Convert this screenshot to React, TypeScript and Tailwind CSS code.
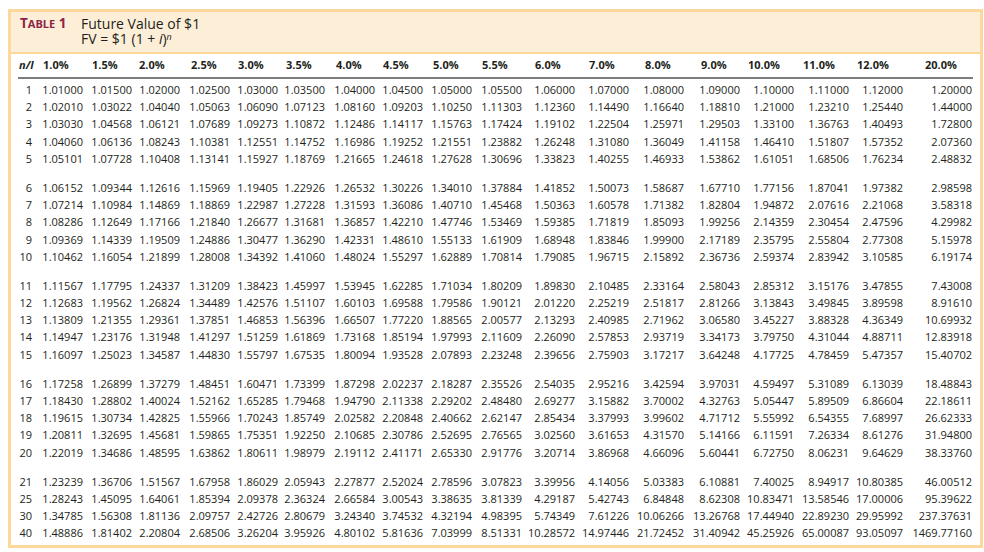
const COLS =
  'grid grid-cols-[14px_51px_49px_48px_50px_48px_47px_50px_48px_49px_50px_53px_54px_55px_56px_54px_55px_54px_69px]'

// header label, and width of the box the label is left-aligned in
const headers: { label: string; box: string }[] = [
  { label: '1.0%', box: 'w-[40px]' },
  { label: '1.5%', box: 'w-[40px]' },
  { label: '2.0%', box: 'w-[41px]' },
  { label: '2.5%', box: 'w-[39px]' },
  { label: '3.0%', box: 'w-[40px]' },
  { label: '3.5%', box: 'w-[39px]' },
  { label: '4.0%', box: 'w-[39px]' },
  { label: '4.5%', box: 'w-[40px]' },
  { label: '5.0%', box: 'w-[39px]' },
  { label: '5.5%', box: 'w-[40px]' },
  { label: '6.0%', box: 'w-[40px]' },
  { label: '7.0%', box: 'w-[40px]' },
  { label: '8.0%', box: 'w-[39px]' },
  { label: '9.0%', box: 'w-[39px]' },
  { label: '10.0%', box: 'w-[46px]' },
  { label: '11.0%', box: 'w-[46px]' },
  { label: '12.0%', box: 'w-[46px]' },
  { label: '20.0%', box: 'w-[47px]' },
]

const groups: string[][] = [
  [
    '1 1.01000 1.01500 1.02000 1.02500 1.03000 1.03500 1.04000 1.04500 1.05000 1.05500 1.06000 1.07000 1.08000 1.09000 1.10000 1.11000 1.12000 1.20000',
    '2 1.02010 1.03022 1.04040 1.05063 1.06090 1.07123 1.08160 1.09203 1.10250 1.11303 1.12360 1.14490 1.16640 1.18810 1.21000 1.23210 1.25440 1.44000',
    '3 1.03030 1.04568 1.06121 1.07689 1.09273 1.10872 1.12486 1.14117 1.15763 1.17424 1.19102 1.22504 1.25971 1.29503 1.33100 1.36763 1.40493 1.72800',
    '4 1.04060 1.06136 1.08243 1.10381 1.12551 1.14752 1.16986 1.19252 1.21551 1.23882 1.26248 1.31080 1.36049 1.41158 1.46410 1.51807 1.57352 2.07360',
    '5 1.05101 1.07728 1.10408 1.13141 1.15927 1.18769 1.21665 1.24618 1.27628 1.30696 1.33823 1.40255 1.46933 1.53862 1.61051 1.68506 1.76234 2.48832',
  ],
  [
    '6 1.06152 1.09344 1.12616 1.15969 1.19405 1.22926 1.26532 1.30226 1.34010 1.37884 1.41852 1.50073 1.58687 1.67710 1.77156 1.87041 1.97382 2.98598',
    '7 1.07214 1.10984 1.14869 1.18869 1.22987 1.27228 1.31593 1.36086 1.40710 1.45468 1.50363 1.60578 1.71382 1.82804 1.94872 2.07616 2.21068 3.58318',
    '8 1.08286 1.12649 1.17166 1.21840 1.26677 1.31681 1.36857 1.42210 1.47746 1.53469 1.59385 1.71819 1.85093 1.99256 2.14359 2.30454 2.47596 4.29982',
    '9 1.09369 1.14339 1.19509 1.24886 1.30477 1.36290 1.42331 1.48610 1.55133 1.61909 1.68948 1.83846 1.99900 2.17189 2.35795 2.55804 2.77308 5.15978',
    '10 1.10462 1.16054 1.21899 1.28008 1.34392 1.41060 1.48024 1.55297 1.62889 1.70814 1.79085 1.96715 2.15892 2.36736 2.59374 2.83942 3.10585 6.19174',
  ],
  [
    '11 1.11567 1.17795 1.24337 1.31209 1.38423 1.45997 1.53945 1.62285 1.71034 1.80209 1.89830 2.10485 2.33164 2.58043 2.85312 3.15176 3.47855 7.43008',
    '12 1.12683 1.19562 1.26824 1.34489 1.42576 1.51107 1.60103 1.69588 1.79586 1.90121 2.01220 2.25219 2.51817 2.81266 3.13843 3.49845 3.89598 8.91610',
    '13 1.13809 1.21355 1.29361 1.37851 1.46853 1.56396 1.66507 1.77220 1.88565 2.00577 2.13293 2.40985 2.71962 3.06580 3.45227 3.88328 4.36349 10.69932',
    '14 1.14947 1.23176 1.31948 1.41297 1.51259 1.61869 1.73168 1.85194 1.97993 2.11609 2.26090 2.57853 2.93719 3.34173 3.79750 4.31044 4.88711 12.83918',
    '15 1.16097 1.25023 1.34587 1.44830 1.55797 1.67535 1.80094 1.93528 2.07893 2.23248 2.39656 2.75903 3.17217 3.64248 4.17725 4.78459 5.47357 15.40702',
  ],
  [
    '16 1.17258 1.26899 1.37279 1.48451 1.60471 1.73399 1.87298 2.02237 2.18287 2.35526 2.54035 2.95216 3.42594 3.97031 4.59497 5.31089 6.13039 18.48843',
    '17 1.18430 1.28802 1.40024 1.52162 1.65285 1.79468 1.94790 2.11338 2.29202 2.48480 2.69277 3.15882 3.70002 4.32763 5.05447 5.89509 6.86604 22.18611',
    '18 1.19615 1.30734 1.42825 1.55966 1.70243 1.85749 2.02582 2.20848 2.40662 2.62147 2.85434 3.37993 3.99602 4.71712 5.55992 6.54355 7.68997 26.62333',
    '19 1.20811 1.32695 1.45681 1.59865 1.75351 1.92250 2.10685 2.30786 2.52695 2.76565 3.02560 3.61653 4.31570 5.14166 6.11591 7.26334 8.61276 31.94800',
    '20 1.22019 1.34686 1.48595 1.63862 1.80611 1.98979 2.19112 2.41171 2.65330 2.91776 3.20714 3.86968 4.66096 5.60441 6.72750 8.06231 9.64629 38.33760',
  ],
  [
    '21 1.23239 1.36706 1.51567 1.67958 1.86029 2.05943 2.27877 2.52024 2.78596 3.07823 3.39956 4.14056 5.03383 6.10881 7.40025 8.94917 10.80385 46.00512',
    '25 1.28243 1.45095 1.64061 1.85394 2.09378 2.36324 2.66584 3.00543 3.38635 3.81339 4.29187 5.42743 6.84848 8.62308 10.83471 13.58546 17.00006 95.39622',
    '30 1.34785 1.56308 1.81136 2.09757 2.42726 2.80679 3.24340 3.74532 4.32194 4.98395 5.74349 7.61226 10.06266 13.26768 17.44940 22.89230 29.95992 237.37631',
    '40 1.48886 1.81402 2.20804 2.68506 3.26204 3.95926 4.80102 5.81636 7.03999 8.51331 10.28572 14.97446 21.72452 31.40942 45.25926 65.00087 93.05097 1469.77160',
  ],
]

export default function App() {
  return (
    <div className="min-h-[552px] w-[984px] bg-white pt-[9px] pl-[8px] font-['Open_Sans',sans-serif] text-[#231f20]">
      <div className="w-[975px] border-[3px] border-[#fcd89c]">
        {/* Title band */}
        <div className="flex h-[42px] border-b-2 border-[#fcd89c] bg-[#fdeed8] pt-[4px] pl-[9px]">
          <div className="w-[61px] text-[13.5px] leading-[15px] font-bold text-[#8d2446]">
            T<span className="text-[11px]">ABLE</span> 1
          </div>
          <div className="text-[14px] leading-[15px]">
            <div>Future Value of $1</div>
            <div>
              FV = $1 (1 + <span className="italic">i</span>)
              <span className="relative -top-[4px] text-[9px] italic">n</span>
            </div>
          </div>
        </div>

        {/* Table */}
        <div className="ml-[7px] w-[955px] pb-[3px] text-[11px]">
          <div className={`${COLS} h-[23px] items-center font-bold`}>
            <div className="pl-[1px] whitespace-nowrap italic">n/I</div>
            {headers.map((h) => (
              <div key={h.label} className="flex justify-end">
                <span className={`${h.box} whitespace-nowrap`}>{h.label}</span>
              </div>
            ))}
          </div>
          <div className="h-[2px] bg-[#7d7d7d]" />

          <div className="pt-[2px]">
            {groups.map((rows, gi) => (
              <div key={gi} className={gi === 0 ? '' : 'mt-[12px]'}>
                {rows.map((line) => {
                  const cells = line.split(' ')
                  return (
                    <div key={cells[0]} className={`${COLS} h-[17.2px] items-center leading-[17.2px]`}>
                      {cells.map((c, ci) => (
                        <div key={ci} className="text-right whitespace-nowrap">
                          {c}
                        </div>
                      ))}
                    </div>
                  )
                })}
              </div>
            ))}
          </div>
        </div>
      </div>
    </div>
  )
}
